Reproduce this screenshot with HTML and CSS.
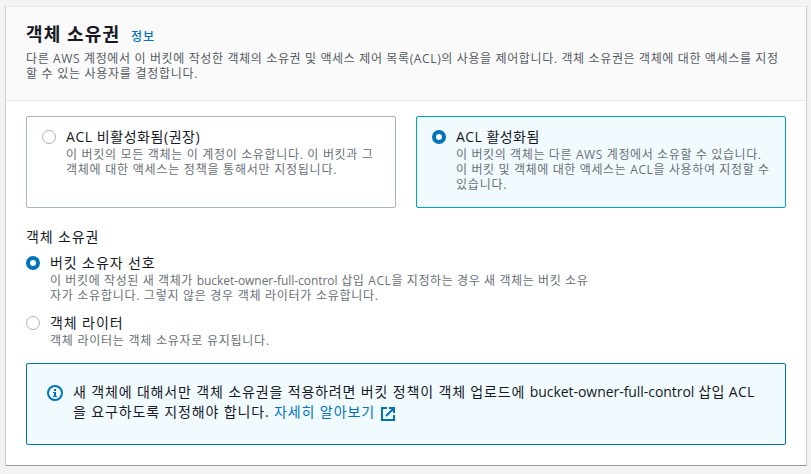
FILE: index.html
```html
<!DOCTYPE html>
<html lang="ko">
<head>
<meta charset="utf-8">
<title>객체 소유권</title>
<link rel="stylesheet" href="styles.css">
</head>
<body>
<section class="panel">
  <header class="panel-header">
    <div class="title-row"><h2>객체 소유권</h2><a class="info">정보</a></div>
    <p class="desc header-desc"><span class="line h1">다른 AWS 계정에서 이 버킷에 작성한 객체의 소유권 및 액세스 제어 목록(ACL)의 사용을 제어합니다. 객체 소유권은 객체에 대한 액세스를 지정</span><span class="line h2">할 수 있는 사용자를 결정합니다.</span></p>
  </header>
  <div class="panel-body">
    <div class="tiles">
      <label class="tile">
        <span class="radio"></span>
        <span class="option">
          <span class="option-title t1">ACL 비활성화됨(권장)</span>
          <span class="desc"><span class="line a1">이 버킷의 모든 객체는 이 계정이 소유합니다. 이 버킷과 그</span><span class="line a2">객체에 대한 액세스는 정책을 통해서만 지정됩니다.</span></span>
        </span>
      </label>
      <label class="tile selected">
        <span class="radio checked"></span>
        <span class="option">
          <span class="option-title t2">ACL 활성화됨</span>
          <span class="desc"><span class="line b1">이 버킷의 객체는 다른 AWS 계정에서 소유할 수 있습니다.</span><span class="line b2">이 버킷 및 객체에 대한 액세스는 ACL을 사용하여 지정할 수</span><span class="line b3">있습니다.</span></span>
        </span>
      </label>
    </div>
    <div class="field-label">객체 소유권</div>
    <label class="choice">
      <span class="radio checked"></span>
      <span class="option">
        <span class="option-title t3">버킷 소유자 선호</span>
        <span class="desc"><span class="line c1">이 버킷에 작성된 새 객체가 <span class="latin">bucket-owner-full-control</span> 삽입 ACL을 지정하는 경우 새 객체는 버킷 소유</span><span class="line c2">자가 소유합니다. 그렇지 않은 경우 객체 라이터가 소유합니다.</span></span>
      </span>
    </label>
    <label class="choice">
      <span class="radio"></span>
      <span class="option">
        <span class="option-title t4">객체 라이터</span>
        <span class="desc"><span class="line d1">객체 라이터는 객체 소유자로 유지됩니다.</span></span>
      </span>
    </label>
    <div class="alert">
      <svg class="info-icon" viewBox="0 0 16 16" width="16" height="16"><circle cx="8" cy="8" r="7" fill="none" stroke="#0073bb" stroke-width="2"/><path d="M7 4h2v2H7zM6 7h3v4h1v1H6v-1h1V8H6z" fill="#0073bb"/></svg>
      <div class="alert-text"><span class="line e1">새 객체에 대해서만 객체 소유권을 적용하려면 버킷 정책이 객체 업로드에 <span class="latin">bucket-owner-full-control</span><span class="tail"> 삽입 ACL</span></span><span class="line e2">을 요구하도록 지정해야 합니다. <a class="link">자세히 알아보기<svg class="external" viewBox="0 0 14 14" width="14" height="14"><path d="M6 1H1v12h12V8M8 1h5v5M13 1L5 9" fill="none" stroke="#0073bb" stroke-width="2"/></svg></a></span></div>
    </div>
  </div>
</section>
</body>
</html>
```
FILE: styles.css
```css
* { box-sizing: border-box; }
body {
  margin: 0;
  padding: 6px 5px 0 6px;
  background: #f2f3f3;
  color: #16191f;
  font-family: "Open Sans", "Noto Sans CJK KR", sans-serif;
}
.panel {
  height: 460px;
  background: #fff;
  border-top: 1px solid #eaeded;
  border-bottom: 1px solid #8f979b;
  box-shadow: 1px 0 0 0 #c8cdce, -1px 0 0 0 #c8cdce, 0 1px 0 0 #d5dbdb;
}
.panel-header {
  height: 94px;
  padding: 16px 20px 0;
  background: #fafafa;
  border-bottom: 1px solid #eaeded;
}
.title-row { display: flex; align-items: baseline; gap: 11px; height: 28px; }
h2 { margin: 0; font-size: 18px; line-height: 22px; font-weight: 700; white-space: nowrap; letter-spacing: 1.1px; }
.info { color: #0073bb; font-size: 12px; line-height: 18px; font-weight: 500; letter-spacing: 1px; }
.desc { display: block; margin: 0; color: #687078; font-size: 12px; line-height: 15px; }
.header-desc { color: #545b64; }
.line { display: block; white-space: nowrap; }
.panel-body { padding: 15px 20px 0; }
.tiles { display: grid; grid-template-columns: 370px 370px; gap: 20px; }
.tile {
  display: flex;
  gap: 10px;
  height: 92px;
  padding: 10px 15px;
  border: 1px solid #aab7b8;
  border-radius: 2px;
}
.selected { background: #f1faff; border-color: #00a1c9; }
.radio {
  flex: none;
  width: 14px;
  height: 14px;
  margin-top: 3px;
  border: 1px solid #aab7b8;
  border-radius: 50%;
  background: #fff;
}
.checked { border: 4px solid #0073bb; }
.option { display: block; }
.option-title { display: block; font-size: 14px; line-height: 20px; white-space: nowrap; }
.field-label { margin-top: 19px; height: 26px; font-size: 14px; line-height: 20px; letter-spacing: .85px; }
.choice { display: flex; gap: 10px; margin-bottom: 10px; }
.alert {
  display: flex;
  gap: 10px;
  height: 82px;
  margin-top: 15px;
  padding: 18px 20px;
  border: 1px solid #0073bb;
  border-radius: 2px;
  background: #f1faff;
}
.info-icon { flex: none; margin-top: 3px; }
.alert-text { font-size: 14px; line-height: 20px; }
.link { color: #0073bb; letter-spacing: .9px; }
.external { margin-left: 6px; vertical-align: -4px; }

/* tracking per line of copy */
.h1 { letter-spacing: .635px; }
.h2 { letter-spacing: .72px; }
.a1 { letter-spacing: .68px; }
.a2 { letter-spacing: .76px; }
.b1 { letter-spacing: .62px; }
.b2 { letter-spacing: .63px; }
.b3 { letter-spacing: .8px; }
.c1 { letter-spacing: .6px; }
.c2 { letter-spacing: .72px; }
.d1 { letter-spacing: .75px; }
.t1 { letter-spacing: .55px; }
.t2 { letter-spacing: .45px; }
.t3 { letter-spacing: .9px; }
.t4 { letter-spacing: .9px; }
.e1 { letter-spacing: .85px; }
.e2 { letter-spacing: .85px; }
.latin { letter-spacing: -.05px; }
.tail { letter-spacing: .35px; }
```
